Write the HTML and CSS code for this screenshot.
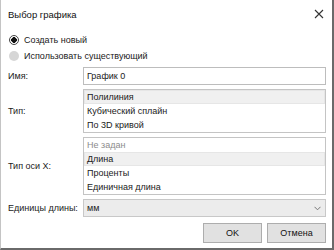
FILE: index.html
```html
<!DOCTYPE html>
<html lang="ru">
<head>
  <meta charset="UTF-8" />
  <title>Выбор графика</title>
  <link rel="stylesheet" href="styles.css">
</head>
<body>
  <div class="dialog">
    <div class="titlebar">
      <span class="title">Выбор графика</span>
      <svg class="close" width="10" height="10" viewBox="0 0 10 10">
        <path d="M1 1 L9 9 M9 1 L1 9" stroke="#333" stroke-width="1.1" fill="none" />
      </svg>
    </div>

    <div class="radios">
      <label class="radio">
        <span class="dot checked"></span>
        Создать новый
      </label>
      <label class="radio">
        <span class="dot disabled"></span>
        Использовать существующий
      </label>
    </div>

    <div class="form">
      <div class="label">Имя:</div>
      <div class="input">График 0</div>

      <div class="label">Тип:</div>
      <div class="listbox">
        <div class="item selected">Полилиния</div>
        <div class="item">Кубический сплайн</div>
        <div class="item">По 3D кривой</div>
      </div>

      <div class="label">Тип оси X:</div>
      <div class="listbox">
        <div class="item muted">Не задан</div>
        <div class="item selected">Длина</div>
        <div class="item">Проценты</div>
        <div class="item">Единичная длина</div>
      </div>

      <div class="label">Единицы длины:</div>
      <div class="combo">
        <span>мм</span>
        <svg class="chevron" width="7" height="5" viewBox="0 0 7 5">
          <path d="M0.5 0.8 L3.5 3.8 L6.5 0.8" stroke="#777" stroke-width="1" fill="none" />
        </svg>
      </div>
    </div>

    <div class="buttons">
      <button class="btn">OK</button>
      <button class="btn">Отмена</button>
    </div>
  </div>
</body>
</html>
```

FILE: styles.css
```css
/* Windows-like dialog */
body {
  margin: 0;
  font-family: 'Liberation Sans', Arial, sans-serif;
  font-size: 9px;
  color: #1a1a1a;
  background: #ffffff;
}

.dialog {
  width: 334px;
  height: 250px;
  box-sizing: border-box;
  background: #ffffff;
  border-left: 1px solid #c4c4c4;
  border-right: 2px solid #6a6a6a;
  border-bottom: 2px solid #6a6a6a;
  padding: 0 6px 0 7px;
  display: flex;
  flex-direction: column;
}

.titlebar {
  height: 28px;
  display: flex;
  align-items: center;
  justify-content: space-between;
  flex-shrink: 0;
}

.title {
  font-size: 9.5px;
  color: #111;
}

.close {
  margin-right: 2px;
}

.radios {
  padding-top: 4px;
  display: flex;
  flex-direction: column;
}

.radio {
  height: 16px;
  display: flex;
  align-items: center;
  gap: 5px;
}

.dot {
  width: 10px;
  height: 10px;
  box-sizing: border-box;
  border-radius: 50%;
  margin-left: 1px;
}

.dot.checked {
  border: 1px solid #444;
  background: radial-gradient(circle, #111 0 2.6px, #fff 3px);
}

.dot.disabled {
  background: #d6d6d6;
}

.form {
  margin-top: 3px;
  display: grid;
  grid-template-columns: 75px 1fr;
  row-gap: 4px;
  align-items: center;
}

.label {
  white-space: nowrap;
}

.input {
  height: 18px;
  box-sizing: border-box;
  border: 1px solid #bdbdbd;
  padding: 0 3px;
  line-height: 16px;
}

.listbox {
  border: 1px solid #c4c4c4;
}

.item {
  height: 14px;
  line-height: 14px;
  padding: 0 3px;
  white-space: nowrap;
}

.item.selected {
  background: #f0f0f0;
  box-shadow: inset 0 0 0 1px #e6e6e6;
}

.item.muted {
  color: #8c8c8c;
}

.combo {
  height: 18px;
  box-sizing: border-box;
  border: 1px solid #c8c8c8;
  background: #ececec;
  padding: 0 4px 0 3px;
  display: flex;
  align-items: center;
  justify-content: space-between;
}

.buttons {
  margin-top: 6px;
  display: flex;
  justify-content: flex-end;
  gap: 5px;
}

.btn {
  width: 59px;
  height: 20px;
  box-sizing: border-box;
  border: 1px solid #adadad;
  background: #e1e1e1;
  font-family: inherit;
  font-size: 9px;
  color: #111;
  padding: 0;
}
```
